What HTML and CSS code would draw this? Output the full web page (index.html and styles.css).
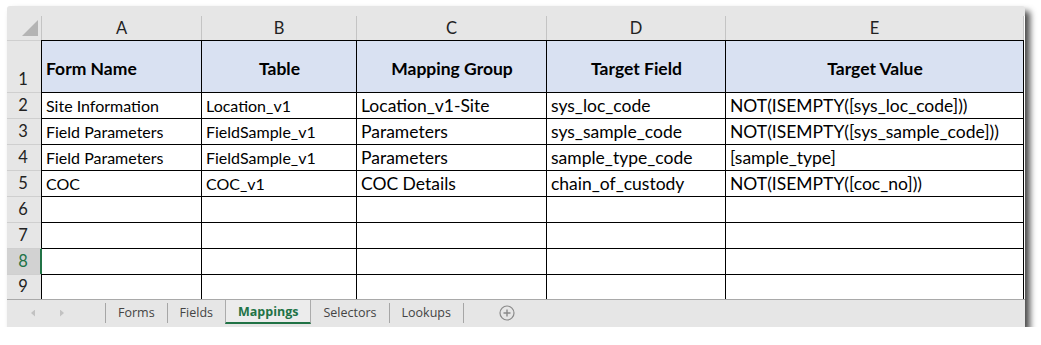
FILE: index.html
```html
<!DOCTYPE html>
<html>
<head>
<meta charset="utf-8">
<link rel="stylesheet" href="styles.css">
</head>
<body>
<div class="window">
  <div class="topstrip"></div>
  <div class="sheet">
    <div class="corner"><span class="tri"></span></div>
    <div class="colhead">A</div>
    <div class="colhead">B</div>
    <div class="colhead">C</div>
    <div class="colhead">D</div>
    <div class="colhead last">E</div>

    <div class="rowhead">1</div>
    <div class="cell hdr left">Form Name</div>
    <div class="cell hdr">Table</div>
    <div class="cell hdr">Mapping Group</div>
    <div class="cell hdr">Target Field</div>
    <div class="cell hdr last">Target Value</div>

    <div class="rowhead">2</div>
    <div class="cell small">Site Information</div>
    <div class="cell small">Location_v1</div>
    <div class="cell">Location_v1-Site</div>
    <div class="cell">sys_loc_code</div>
    <div class="cell last">NOT(ISEMPTY([sys_loc_code]))</div>

    <div class="rowhead">3</div>
    <div class="cell small">Field Parameters</div>
    <div class="cell small">FieldSample_v1</div>
    <div class="cell">Parameters</div>
    <div class="cell">sys_sample_code</div>
    <div class="cell last">NOT(ISEMPTY([sys_sample_code]))</div>

    <div class="rowhead">4</div>
    <div class="cell small">Field Parameters</div>
    <div class="cell small">FieldSample_v1</div>
    <div class="cell">Parameters</div>
    <div class="cell">sample_type_code</div>
    <div class="cell last">[sample_type]</div>

    <div class="rowhead">5</div>
    <div class="cell small">COC</div>
    <div class="cell small">COC_v1</div>
    <div class="cell">COC Details</div>
    <div class="cell">chain_of_custody</div>
    <div class="cell last">NOT(ISEMPTY([coc_no]))</div>

    <div class="rowhead">6</div>
    <div class="cell"></div><div class="cell"></div><div class="cell"></div><div class="cell"></div><div class="cell last"></div>

    <div class="rowhead">7</div>
    <div class="cell"></div><div class="cell"></div><div class="cell"></div><div class="cell"></div><div class="cell last"></div>

    <div class="rowhead selected">8</div>
    <div class="cell active"></div><div class="cell"></div><div class="cell"></div><div class="cell"></div><div class="cell last"></div>

    <div class="rowhead">9</div>
    <div class="cell"></div><div class="cell"></div><div class="cell"></div><div class="cell"></div><div class="cell last"></div>
  </div>
  <div class="tabbar">
    <div class="nav">
      <span class="arrow arrow-left"></span>
      <span class="arrow arrow-right"></span>
    </div>
    <span class="sep"></span>
    <div class="tab">Forms</div>
    <span class="sep"></span>
    <div class="tab">Fields</div>
    <div class="tab current">Mappings</div>
    <div class="tab">Selectors</div>
    <span class="sep"></span>
    <div class="tab">Lookups</div>
    <span class="sep"></span>
    <div class="add">
      <svg width="16" height="16" viewBox="0 0 16 16">
        <circle cx="8" cy="8" r="7" fill="none" stroke="#8a8a8a" stroke-width="1.2"/>
        <path d="M8 4.5v7M4.5 8h7" stroke="#8a8a8a" stroke-width="1.4"/>
      </svg>
    </div>
  </div>
</div>
</body>
</html>
```
FILE: styles.css
```css
* { box-sizing: border-box; }
html, body { margin: 0; padding: 0; background: #ffffff; }
body { font-family: Lato, "Liberation Sans", sans-serif; }

.window {
  margin: 6px 0 0 7px;
  width: 1018px;
  height: 321px;
  background: #e6e6e6;
  border-radius: 3px 3px 0 0;
  box-shadow: 5px 5px 6px rgba(0, 0, 0, 0.7);
  display: flex;
  flex-direction: column;
  overflow: hidden;
}

.topstrip { height: 10px; flex: none; }

.sheet {
  display: grid;
  grid-template-columns: 34px 160px 155px 190px 179px 299px;
  grid-template-rows: 24px 52px repeat(7, 26px) 25px;
  background: #ffffff;
  font-size: 17.5px;
  color: #000;
  flex: none;
}

.corner {
  background: #e6e6e6;
  display: flex;
  align-items: flex-end;
  justify-content: flex-end;
  padding: 0 3px 4px 0;
}
.tri {
  width: 16px;
  height: 16px;
  background: #b4b4b4;
  clip-path: polygon(100% 0, 100% 100%, 0 100%);
}

.colhead {
  background: #e6e6e6;
  border-left: 1px solid #c4c4c4;
  text-align: center;
  line-height: 25px;
  font-size: 16.5px;
  color: #222;
}
.colhead.last { border-right: 1px solid #c4c4c4; }

.rowhead {
  background: #e6e6e6;
  border-top: 1px solid #cfcfcf;
  display: flex;
  align-items: flex-end;
  justify-content: center;
  padding-right: 2px;
  line-height: 25px;
  font-size: 16.5px;
  color: #222;
}
.rowhead.selected {
  background: #d2d2d2;
  color: #217346;
  box-shadow: inset -1px 0 0 #217346;
}

.cell {
  border-left: 1px solid #000;
  border-top: 1px solid #000;
  padding: 0 3px 0 4px;
  line-height: 25px;
  white-space: nowrap;
  overflow: hidden;
}
.cell.small { font-size: 16px; }
.cell.last { border-right: 1px solid #000; }
.cell.active { border-left-color: #217346; }

.hdr {
  background: #d9e1f2;
  font-weight: bold;
  display: flex;
  align-items: center;
  justify-content: center;
  padding-top: 3px;
}
.hdr.left { justify-content: flex-start; }

.tabbar {
  height: 28px;
  flex: none;
  border-top: 1px solid #a9a9a9;
  display: flex;
  align-items: flex-start;
  font-family: "Open Sans", "Noto Sans", sans-serif;
  font-size: 12.5px;
  color: #444;
}

.nav {
  width: 98px;
  height: 26px;
  display: flex;
  align-items: center;
  padding-left: 24px;
  gap: 25px;
}
.arrow {
  width: 4px;
  height: 7px;
  background: #c2c2c2;
}
.arrow-left { clip-path: polygon(100% 0, 100% 100%, 0 50%); }
.arrow-right { clip-path: polygon(0 0, 100% 50%, 0 100%); }

.sep {
  width: 1px;
  height: 20px;
  margin-top: 3px;
  background: #a6a6a6;
  flex: none;
}

.tab {
  height: 26px;
  line-height: 26px;
  padding: 0 12px;
  white-space: nowrap;
}
.tab.current {
  height: 24px;
  line-height: 23px;
  background: #ececec;
  border-left: 1px solid #ababab;
  border-right: 1px solid #ababab;
  border-bottom: 2px solid #217346;
  color: #217346;
  font-weight: bold;
}

.add {
  margin-left: 35px;
  height: 26px;
  display: flex;
  align-items: center;
}
.add svg { display: block; }
```
